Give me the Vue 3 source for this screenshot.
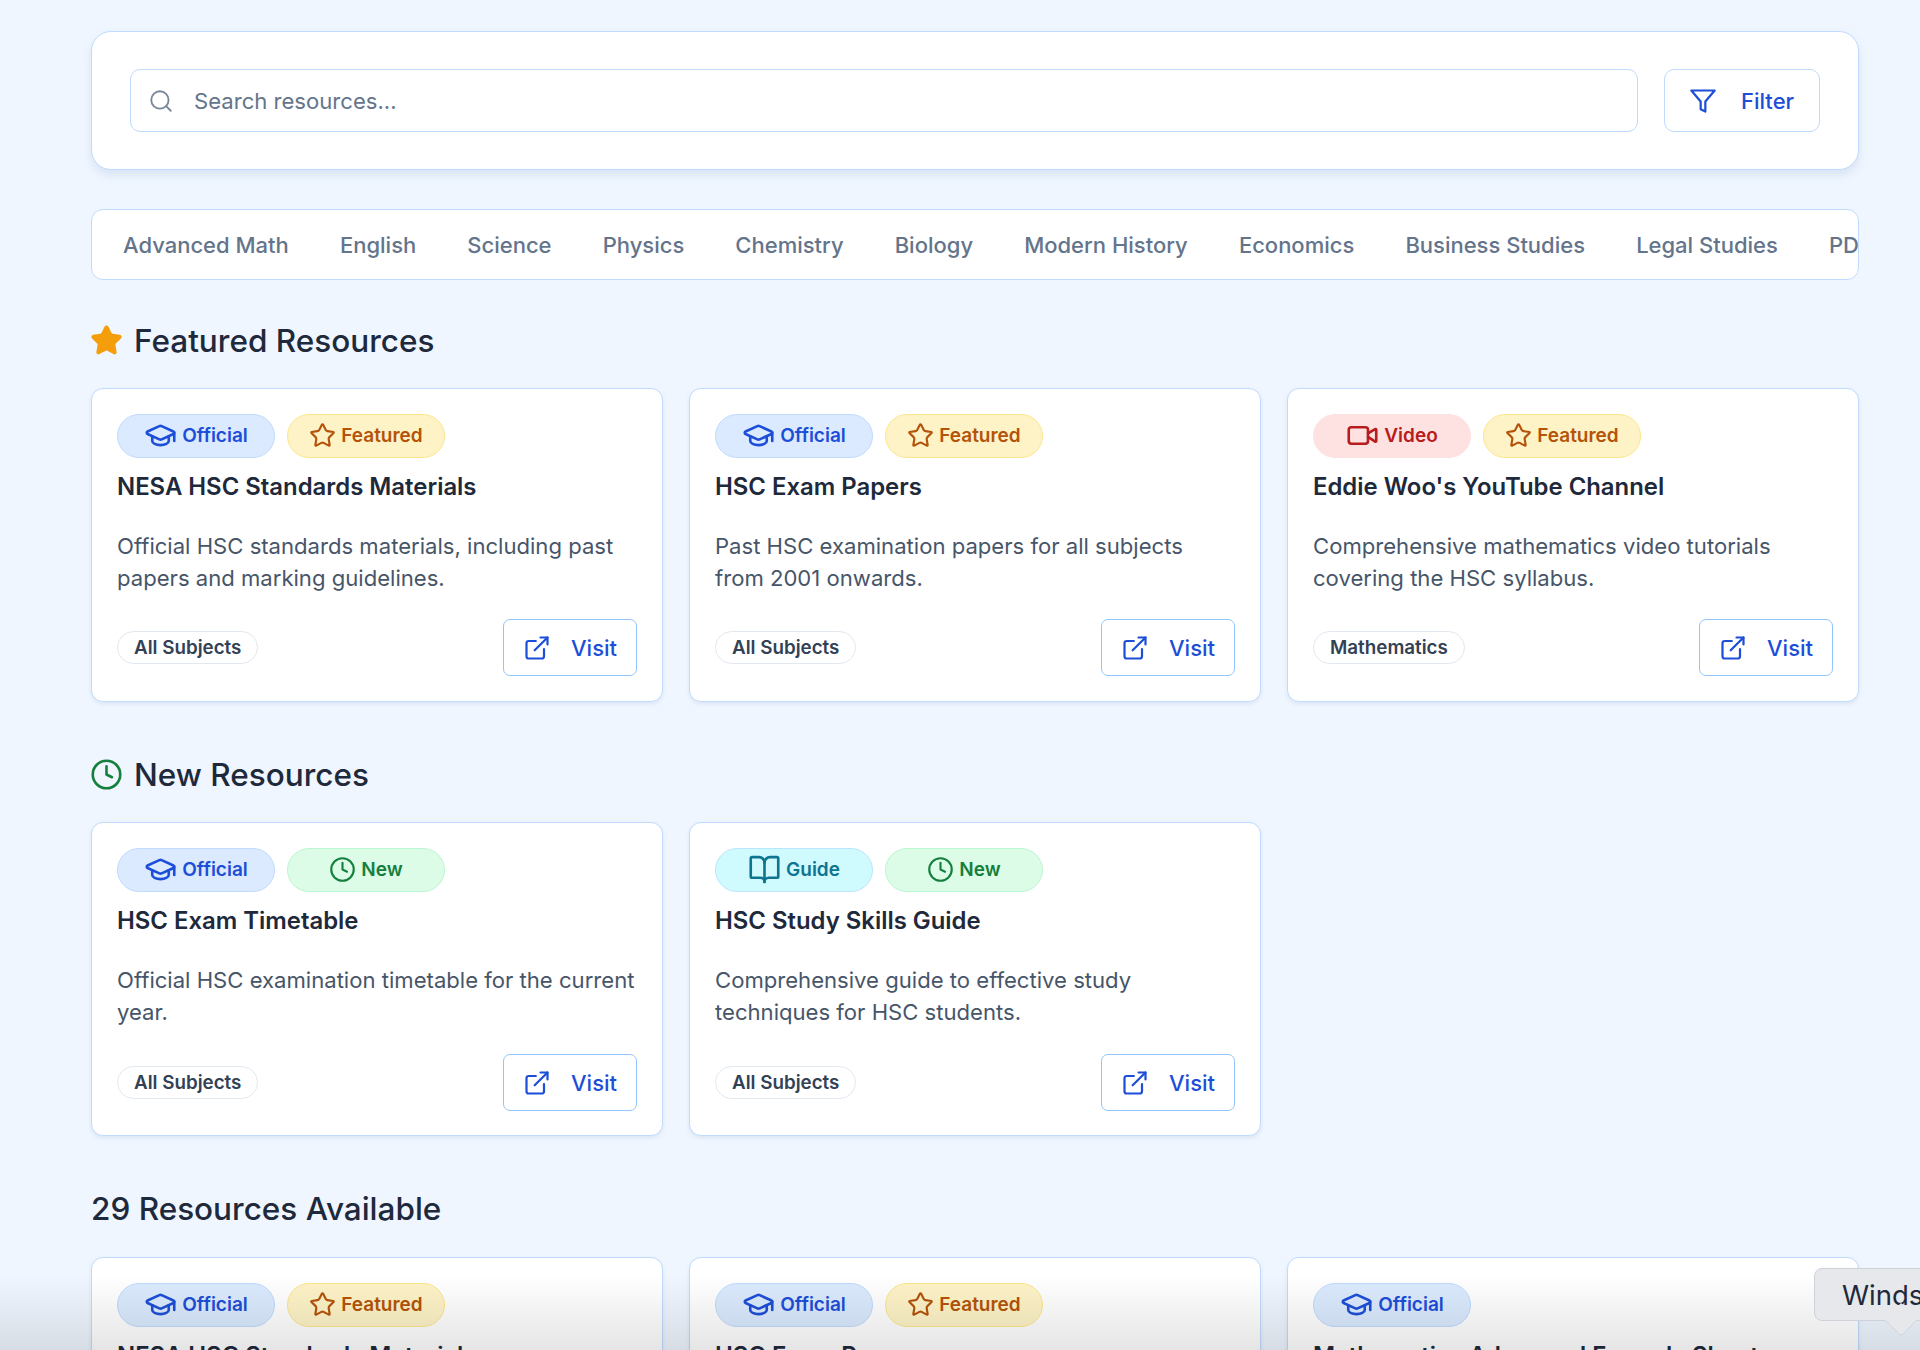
<script setup>
const icons = {
  official: { size: 'big', body: '<path d="M21.42 10.922a1 1 0 0 0-.019-1.838L12.83 5.18a2 2 0 0 0-1.66 0L2.6 9.08a1 1 0 0 0 0 1.832l8.57 3.908a2 2 0 0 0 1.66 0z"/><path d="M22 10v6"/><path d="M6 12.5V16a6 3 0 0 0 12 0v-3.5"/>' },
  star: { size: 'small', body: '<path d="M11.525 2.295a.53.53 0 0 1 .95 0l2.31 4.679a2.123 2.123 0 0 0 1.595 1.16l5.166.756a.53.53 0 0 1 .294.904l-3.736 3.638a2.123 2.123 0 0 0-.611 1.878l.882 5.14a.53.53 0 0 1-.771.56l-4.618-2.428a2.122 2.122 0 0 0-1.973 0L6.396 21.01a.53.53 0 0 1-.77-.56l.881-5.139a2.122 2.122 0 0 0-.611-1.879L2.16 9.795a.53.53 0 0 1 .294-.906l5.165-.755a2.122 2.122 0 0 0 1.597-1.16z"/>' },
  video: { size: 'big', body: '<path d="m16 13 5.223 3.482a.5.5 0 0 0 .777-.416V7.87a.5.5 0 0 0-.752-.432L16 10.5"/><rect x="2" y="6" width="14" height="12" rx="2"/>' },
  clock: { size: 'small', body: '<circle cx="12" cy="12" r="10"/><polyline points="12 6 12 12 16 14"/>' },
  guide: { size: 'big', body: '<path d="M12 7v14"/><path d="M3 18a1 1 0 0 1-1-1V4a1 1 0 0 1 1-1h5a4 4 0 0 1 4 4 4 4 0 0 1 4-4h5a1 1 0 0 1 1 1v13a1 1 0 0 1-1 1h-6a3 3 0 0 0-3 3 3 3 0 0 0-3-3z"/>' }
}

const kinds = {
  official: { label: 'Official', icon: 'official' },
  featured: { label: 'Featured', icon: 'star' },
  video: { label: 'Video', icon: 'video' },
  fresh: { label: 'New', icon: 'clock' },
  guide: { label: 'Guide', icon: 'guide' }
}

const tabs = ['Advanced Math', 'English', 'Science', 'Physics', 'Chemistry', 'Biology', 'Modern History', 'Economics', 'Business Studies', 'Legal Studies', 'PDHPE']

const nesa = { title: 'NESA HSC Standards Materials', desc: 'Official HSC standards materials, including past papers and marking guidelines.', subject: 'All Subjects', badges: ['official', 'featured'] }
const papers = { title: 'HSC Exam Papers', desc: 'Past HSC examination papers for all subjects from 2001 onwards.', subject: 'All Subjects', badges: ['official', 'featured'] }

const featured = [
  nesa,
  papers,
  { title: "Eddie Woo's YouTube Channel", desc: 'Comprehensive mathematics video tutorials covering the HSC syllabus.', subject: 'Mathematics', badges: ['video', 'featured'] }
]
const fresh = [
  { title: 'HSC Exam Timetable', desc: 'Official HSC examination timetable for the current year.', subject: 'All Subjects', badges: ['official', 'fresh'] },
  { title: 'HSC Study Skills Guide', desc: 'Comprehensive guide to effective study techniques for HSC students.', subject: 'All Subjects', badges: ['guide', 'fresh'] }
]
const all = [
  nesa,
  papers,
  { title: 'Mathematics Advanced Formula Sheet', desc: 'Official formula sheet for the Mathematics Advanced HSC examination.', subject: 'Mathematics', badges: ['official'] }
]

const sections = [
  { title: 'Featured Resources', icon: 'star', items: featured },
  { title: 'New Resources', icon: 'clock', items: fresh },
  { title: '29 Resources Available', icon: '', items: all }
]
</script>

<template>
  <div class="page">
    <div class="search-card">
      <label class="search-box">
        <svg class="search-icon" viewBox="0 0 24 24"><circle cx="11" cy="11" r="8" /><path d="m21 21-4.3-4.3" /></svg>
        <input class="search-input" type="text" placeholder="Search resources..." />
      </label>
      <button class="filter-btn">
        <svg class="filter-icon" viewBox="0 0 24 24"><polygon points="22 3 2 3 10 12.46 10 19 14 21 14 12.46 22 3" /></svg>
        <span>Filter</span>
      </button>
    </div>

    <div class="tabs">
      <span v-for="tab in tabs" :key="tab" class="tab">{{ tab }}</span>
    </div>

    <section v-for="section in sections" :key="section.title" class="section">
      <h2 class="section-title">
        <svg v-if="section.icon === 'star'" class="section-icon star-fill" viewBox="0 0 24 24" v-html="icons.star.body"></svg>
        <svg v-if="section.icon === 'clock'" class="section-icon clock-line" viewBox="0 0 24 24" v-html="icons.clock.body"></svg>
        {{ section.title }}
      </h2>
      <div class="grid">
        <article v-for="item in section.items" :key="item.title" class="card">
          <div class="badges">
            <span v-for="b in item.badges" :key="b" class="badge" :class="'badge-' + b">
              <svg class="badge-icon" :class="'icon-' + icons[kinds[b].icon].size" viewBox="0 0 24 24" v-html="icons[kinds[b].icon].body"></svg>
              {{ kinds[b].label }}
            </span>
          </div>
          <h3 class="card-title">{{ item.title }}</h3>
          <p class="card-desc">{{ item.desc }}</p>
          <div class="card-foot">
            <span class="subject">{{ item.subject }}</span>
            <button class="visit">
              <svg class="visit-icon" viewBox="0 0 24 24"><path d="M15 3h6v6" /><path d="M10 14 21 3" /><path d="M18 13v6a2 2 0 0 1-2 2H5a2 2 0 0 1-2-2V8a2 2 0 0 1 2-2h6" /></svg>
              <span>Visit</span>
            </button>
          </div>
        </article>
      </div>
    </section>

    <div class="fade"></div>
    <div class="tooltip">Winds<span class="tip-arrow"></span></div>
  </div>
</template>

<style>
html, body { margin: 0; background: #eff6ff; }
</style>

<style scoped>
.page {
  position: relative;
  box-sizing: border-box;
  width: 1920px;
  height: 1350px;
  overflow: hidden;
  padding: 31px 61px 0 91px;
  background: #eff6ff;
  font-family: Inter, "Liberation Sans", sans-serif;
  color: #1e293b;
}
svg {
  display: block;
  fill: none;
  stroke: currentColor;
  stroke-width: 2;
  stroke-linecap: round;
  stroke-linejoin: round;
  flex: none;
}
.search-card {
  display: flex;
  gap: 26px;
  box-sizing: border-box;
  height: 139px;
  padding: 37px 38px;
  background: #fff;
  border: 1px solid #bfdbfe;
  border-radius: 20px;
  box-shadow: 0 5px 10px rgba(100, 130, 180, 0.16);
}
.search-box {
  flex: 1;
  display: flex;
  align-items: center;
  gap: 20px;
  padding: 0 17px;
  border: 1px solid #bfdbfe;
  border-radius: 10px;
}
.search-icon { width: 26px; height: 26px; color: #7a8798; stroke-width: 1.7; }
.search-input {
  flex: 1;
  border: 0;
  outline: 0;
  background: transparent;
  font: 400 22.1px Inter, sans-serif;
  color: #475569;
  padding: 0;
}
.search-input::placeholder { color: #64748b; opacity: 1; }
.filter-btn {
  display: flex;
  align-items: center;
  gap: 24px;
  width: 156px;
  padding: 0 0 0 24px;
  box-sizing: border-box;
  background: #fff;
  border: 1px solid #bfdbfe;
  border-radius: 10px;
  color: #1d4ed8;
  font: 500 22px Inter, sans-serif;
}
.filter-icon { width: 28px; height: 28px; stroke-width: 1.9; }
.tabs {
  display: flex;
  gap: 51.1px;
  align-items: center;
  box-sizing: border-box;
  height: 71px;
  margin-top: 39px;
  padding: 0 31px;
  background: #fff;
  border: 1px solid #bfdbfe;
  border-radius: 12px;
  overflow: hidden;
}
.tab {
  flex: none;
  font-size: 22px;
  font-weight: 500;
  color: #64748b;
}
.section { margin-top: 54px; }
.tabs + .section { margin-top: 42px; }
.section-title {
  display: flex;
  align-items: center;
  gap: 11px;
  height: 36px;
  margin: 0 0 30px;
  font-size: 31.5px;
  font-weight: 500;
  color: #1e293b;
}
.section:last-of-type .section-title { margin-bottom: 31px; }
.section-icon { width: 33px; height: 33px; margin-left: -1px; }
.star-fill { color: #f59e0b; fill: #f59e0b; }
.clock-line { color: #15803d; stroke-width: 1.9; }
.grid {
  display: grid;
  grid-template-columns: repeat(3, 1fr);
  gap: 26px;
}
.card {
  box-sizing: border-box;
  height: 314px;
  padding: 25px;
  background: #fff;
  border: 1px solid #bfdbfe;
  border-radius: 12px;
  box-shadow: 0 2px 4px rgba(100, 130, 180, 0.14);
}
.badges { display: flex; gap: 12px; }
.badge {
  display: flex;
  align-items: center;
  justify-content: center;
  gap: 5px;
  box-sizing: border-box;
  width: 158px;
  height: 44px;
  padding-bottom: 1px;
  border: 1px solid;
  border-radius: 23px;
  font-size: 19px;
  font-weight: 600;
}
.badge-icon { stroke-width: 1.9; }
.icon-big { width: 33px; height: 33px; }
.icon-small { width: 27px; height: 27px; }
.badge-official { background: #dbeafe; border-color: #bfdbfe; color: #1d4ed8; }
.badge-featured { background: #fef3c7; border-color: #fde68a; color: #b45309; }
.badge-video { background: #fee2e2; border-color: #fee2e2; color: #b91c1c; }
.badge-fresh { background: #dcfce7; border-color: #bbf7d0; color: #15803d; }
.badge-guide { background: #cffafe; border-color: #bae6fd; color: #0e7490; }
.card-title {
  margin: 15px 0 30px;
  font-size: 23.9px;
  line-height: 28px;
  font-weight: 600;
  color: #1e293b;
}
.card-desc {
  margin: 0;
  font-size: 22.1px;
  line-height: 31.5px;
  height: 64px;
  color: #475569;
}
.card-foot {
  display: flex;
  align-items: center;
  justify-content: space-between;
  margin-top: 24px;
}
.section:nth-of-type(2) .card-foot { margin-top: 25px; }
.subject {
  display: flex;
  align-items: center;
  box-sizing: border-box;
  height: 33px;
  padding: 0 16px 1px;
  background: #fff;
  border: 1px solid #e2e8f0;
  border-radius: 17px;
  font-size: 18.8px;
  font-weight: 600;
  color: #334155;
}
.visit {
  display: flex;
  align-items: center;
  gap: 20px;
  box-sizing: border-box;
  width: 134px;
  height: 57px;
  padding: 0 0 0 19px;
  background: #fff;
  border: 1px solid #93c5fd;
  border-radius: 7px;
  color: #1d4ed8;
  font: 500 22px Inter, sans-serif;
}
.visit-icon { width: 28px; height: 28px; stroke-width: 1.9; }
.fade {
  position: absolute;
  left: 0;
  right: 0;
  bottom: 0;
  height: 75px;
  background: linear-gradient(to bottom, rgba(0, 0, 0, 0), rgba(0, 0, 0, 0.1));
  pointer-events: none;
}
.tooltip {
  position: absolute;
  left: 1814px;
  top: 1268px;
  box-sizing: border-box;
  width: 140px;
  height: 53px;
  padding: 0 0 0 27px;
  display: flex;
  align-items: center;
  background: #e6e8ec;
  border: 1px solid #cfd3d9;
  border-radius: 8px;
  font-size: 27.5px;
  color: #1e293b;
}
.tip-arrow {
  position: absolute;
  left: 74px;
  bottom: -12px;
  width: 23px;
  height: 23px;
  background: #e6e8ec;
  border-right: 1px solid #cfd3d9;
  border-bottom: 1px solid #cfd3d9;
  border-radius: 0 0 4px 0;
  transform: rotate(45deg);
}
</style>
